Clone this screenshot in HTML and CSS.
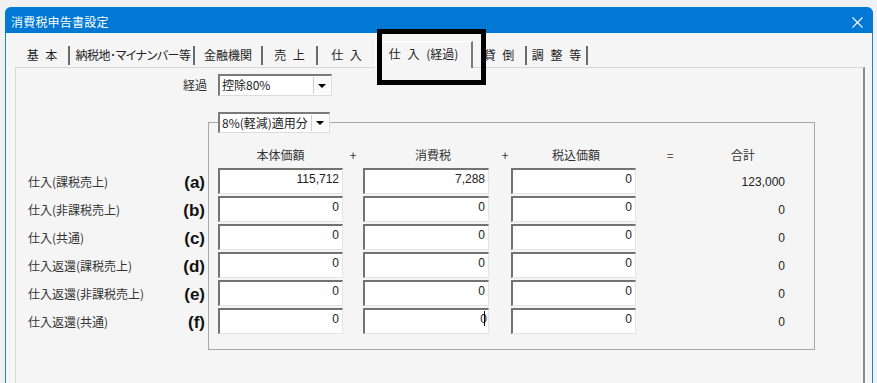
FILE: index.html
```html
<!DOCTYPE html>
<html lang="ja">
<head>
<meta charset="utf-8">
<title>消費税申告書設定</title>
<link rel="stylesheet" href="styles.css">
</head>
<body>
<div class="window">
  <div class="titlebar">
    <span class="title">消費税申告書設定</span>
    <svg class="close" width="11" height="11" viewBox="0 0 11 11"><path d="M0.5 0.5L10.5 10.5M10.5 0.5L0.5 10.5" stroke="#fff" stroke-width="1.1"/></svg>
  </div>
  <div class="client">
    <div class="tabs">
      <div class="tab w1 sep">基 本</div>
      <div class="tab w2 sep prop">納税地･マイナンバー等</div>
      <div class="tab w3 sep">金融機関</div>
      <div class="tab w4 sep">売 上</div>
      <div class="tab w5">仕 入</div>
      <div class="tab w6 active">仕 入 (経過)</div>
      <div class="tab w7 sep">貸 倒</div>
      <div class="tab w8 sep">調 整 等</div>
    </div>
    <div class="panel">
      <div class="toprow">
        <div class="toplabel">経過</div>
        <div class="combo combo-main"><span class="ctext">控除80%</span><span class="cbtn"><i class="tri"></i></span></div>
      </div>
      <div class="section">
        <div class="labels">
          <div class="lrow"><span class="ltext">仕入(課税売上)</span><span class="lkey">(a)</span></div>
          <div class="lrow"><span class="ltext">仕入(非課税売上)</span><span class="lkey">(b)</span></div>
          <div class="lrow"><span class="ltext">仕入(共通)</span><span class="lkey">(c)</span></div>
          <div class="lrow"><span class="ltext">仕入返還(課税売上)</span><span class="lkey">(d)</span></div>
          <div class="lrow"><span class="ltext">仕入返還(非課税売上)</span><span class="lkey">(e)</span></div>
          <div class="lrow"><span class="ltext">仕入返還(共通)</span><span class="lkey">(f)</span></div>
        </div>
        <div class="group">
          <div class="combo combo-legend"><span class="ctext">8%(軽減)適用分</span><span class="cbtn"><i class="tri"></i></span></div>
          <div class="heads">
            <span class="h h1">本体価額</span>
            <span class="h h2">+</span>
            <span class="h h3">消費税</span>
            <span class="h h4">+</span>
            <span class="h h5">税込価額</span>
            <span class="h h6">=</span>
            <span class="h h7">合計</span>
          </div>
          <div class="grid">
            <div class="field">115,712</div><div class="field f2">7,288</div><div class="field f3">0</div><div class="total">123,000</div>
            <div class="field">0</div><div class="field f2">0</div><div class="field f3">0</div><div class="total">0</div>
            <div class="field">0</div><div class="field f2">0</div><div class="field f3">0</div><div class="total">0</div>
            <div class="field">0</div><div class="field f2">0</div><div class="field f3">0</div><div class="total">0</div>
            <div class="field">0</div><div class="field f2">0</div><div class="field f3">0</div><div class="total">0</div>
            <div class="field">0</div><div class="field f2">0<i class="caret"></i></div><div class="field f3">0</div><div class="total">0</div>
          </div>
        </div>
      </div>
    </div>
  </div>
  <div class="mark"></div>
</div>
</body>
</html>
```

FILE: styles.css
```css
* { box-sizing: border-box; }
html, body {
  margin: 0;
  padding: 0;
  background: #f1f1f1;
  overflow: hidden;
  width: 877px;
  height: 383px;
}
body {
  font-family: "Noto Sans CJK JP", "Noto Sans", sans-serif;
  font-size: 12px;
  color: #333;
}
.window {
  position: relative;
  margin: 7px 0 0 5px;
  width: 868px;
  height: 376px;
  border-left: 1px solid #1f80d8;
  border-right: 1px solid #1f80d8;
  border-radius: 7px 7px 0 0;
  background: #f5f5f5;
}
.titlebar {
  height: 26px;
  background: #0078d4;
  color: #fff;
  display: flex;
  align-items: center;
  justify-content: space-between;
  padding: 4px 10px 0 6px;
  border-radius: 6px 6px 0 0;
  margin: 0 -1px;
}
.title {
  font-size: 12px;
  line-height: 16px;
  letter-spacing: 0.2px;
}
.close { display: block; }
.client {
  background: #f5f5f5;
}
.tabs {
  display: flex;
  align-items: flex-start;
  padding: 13px 0 0 10px;
  font-size: 12px;
  color: #222;
}
.tab {
  height: 19px;
  line-height: 18px;
  text-align: center;
  word-spacing: 4px;
  white-space: nowrap;
}
.tab.sep { border-right: 2px solid #6b6b6b; }
.prop { font-feature-settings: "palt"; word-spacing: 0; letter-spacing: -0.5px; padding-left: 3px; }
.w1 { width: 54px; }
.w2 { width: 125px; }
.w3 { width: 68px; }
.w4 { width: 55px; }
.w5 { width: 57px; }
.w6 { width: 98px; }
.w7 { width: 54px; }
.w8 { width: 61px; }
.tab.active {
  position: relative;
  z-index: 1;
  margin-top: -5px;
  height: 27px;
  margin-bottom: -1px;
  line-height: 23px;
  background: #f5f5f5;
  border-top: 1px solid #ffffff;
  border-left: 1px solid #ffffff;
  border-right: 2px solid #7a7a7a;
  word-spacing: 4px;
}
.panel {
  margin-left: 9px;
  width: 850px;
  height: 316px;
  border-top: 1px solid #d8d8d8;
  border-left: 1px solid #d8d8d8;
  border-right: 2px solid #8a8a8a;
  background: #f5f5f5;
}
.toprow {
  display: flex;
  padding-top: 6px;
}
.toplabel {
  width: 202px;
  text-align: right;
  padding-right: 11px;
  line-height: 22px;
}
.combo {
  display: flex;
  background: #fff;
  border-top: 2px solid #7a7a7a;
  border-left: 2px solid #7a7a7a;
  border-right: 1px solid #dcdcdc;
  border-bottom: 1px solid #dcdcdc;
}
.combo-main { width: 114px; height: 22px; }
.combo-legend {
  width: 112px;
  height: 21px;
  margin: -11px 0 0 9px;
}
.ctext {
  flex: 1;
  padding-left: 2px;
  line-height: 18px;
  color: #222;
  white-space: nowrap;
}
.cbtn {
  width: 17px;
  margin: 1px 1px 1px 0;
  border-left: 1px solid #d0d0d0;
  background: #fafafa;
  display: flex;
  align-items: center;
  justify-content: center;
}
.tri {
  width: 0;
  height: 0;
  border-left: 4px solid transparent;
  border-right: 4px solid transparent;
  border-top: 4px solid #000;
}
.section {
  display: flex;
  margin-top: 26px;
}
.labels {
  width: 192px;
  padding-top: 46px;
}
.lrow {
  height: 28px;
  display: flex;
  align-items: center;
  justify-content: space-between;
  padding: 0 3px 0 12px;
}
.ltext {
  font-size: 12px;
  line-height: 16px;
  color: #333;
  white-space: nowrap;
}
.lkey {
  font-family: "Liberation Sans", "Noto Sans", sans-serif;
  font-weight: bold;
  font-size: 17px;
  line-height: 20px;
  color: #111;
  padding-top: 1px;
}
.group {
  width: 607px;
  height: 228px;
  border: 1px solid #a8a8a8;
}
.heads {
  display: flex;
  margin-top: 13px;
  height: 18px;
  line-height: 18px;
  padding-left: 9px;
  color: #333;
}
.h { text-align: center; display: block; }
.h1 { width: 125px; }
.h2 { width: 20px; }
.h3 { width: 126px; padding-left: 14px; }
.h4 { width: 22px; padding-left: 10px; }
.h5 { width: 125px; padding-left: 5px; }
.h6 { width: 68px; }
.h7 { width: 78px; }
.grid {
  display: grid;
  grid-template-columns: 125px 146px 147px 149px;
  grid-auto-rows: 26px;
  row-gap: 2px;
  margin: 4px 0 0 9px;
}
.field {
  height: 26px;
  width: 125px;
  background: #fff;
  border-top: 2px solid #727272;
  border-left: 2px solid #727272;
  border-right: 1px solid #e4e4e4;
  border-bottom: 1px solid #e4e4e4;
  text-align: right;
  padding-right: 3px;
  font-family: "Liberation Sans", "Noto Sans", sans-serif;
  font-size: 12px;
  line-height: 19px;
  color: #222;
}
.field.f2 { margin-left: 20px; width: 126px; }
.field.f3 { margin-left: 22px; width: 125px; }
.total {
  text-align: right;
  font-family: "Liberation Sans", "Noto Sans", sans-serif;
  font-size: 12px;
  line-height: 28px;
  color: #222;
}
.caret {
  display: inline-block;
  width: 1px;
  height: 15px;
  background: #000;
  vertical-align: -3px;
  margin-left: -3px;
}
.mark {
  position: absolute;
  left: 371px;
  top: 22px;
  width: 109px;
  height: 56px;
  border: 5px solid #000;
  z-index: 5;
}
```
